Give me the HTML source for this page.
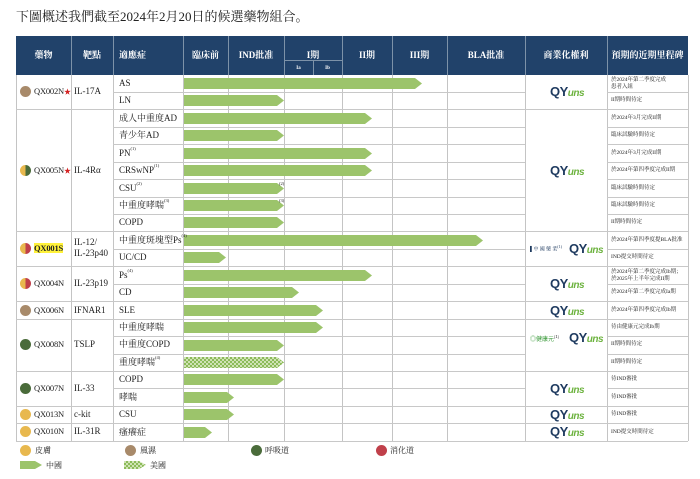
<!DOCTYPE html>
<html><head><meta charset="utf-8"><style>
*{margin:0;padding:0;box-sizing:border-box}
body{width:700px;height:479px;background:#fff;position:relative;overflow:hidden;font-family:"Liberation Serif","Noto Serif CJK SC",serif;color:#222}
.a{position:absolute}
.hd{position:absolute;top:36px;height:39px;background:#21426a;}
.ht{position:absolute;color:#fff;font-weight:bold;font-size:9px;text-align:center;line-height:12px}
.v{position:absolute;width:1px;background:#c4c4c4}
.h{position:absolute;height:1px;background:#c8c8c8}
.hv{position:absolute;width:1px;background:#7d92a8}
.b{position:absolute;left:184px;height:11px;background:#9cc46b;clip-path:polygon(0 0,calc(100% - 7px) 0,100% 50%,calc(100% - 7px) 100%,0 100%)}
.p{background-color:#cfe3b5;background-image:linear-gradient(45deg,#8dbb5a 25%,transparent 25%,transparent 75%,#8dbb5a 75%),linear-gradient(45deg,#8dbb5a 25%,transparent 25%,transparent 75%,#8dbb5a 75%);background-size:4px 4px;background-position:0 0,2px 2px}
.t{position:absolute;left:119px;font-size:9px;height:17px;line-height:17px;white-space:nowrap}
.t sup,.s{font-size:4.5px;vertical-align:top;line-height:8px}
.m{position:absolute;left:611px;font-size:5.5px;line-height:6.5px;white-space:nowrap;display:flex;align-items:center;height:17px}
.d{position:absolute;left:34px;font-size:8.5px;white-space:nowrap;letter-spacing:-0.2px}
.g{position:absolute;left:74px;font-size:9px;white-space:nowrap;line-height:11px}
.c{position:absolute;left:20px;width:11px;height:11px;border-radius:50%}
.logo{position:absolute;font-family:"Liberation Sans",sans-serif;font-weight:bold;font-size:13px;line-height:12px;white-space:nowrap;letter-spacing:-0.5px}
.logo b{color:#1e3a5f}
.logo i{color:#6db33f;font-size:10px;font-weight:bold}
.star{color:#d42020;font-size:7px}
</style></head><body>
<div class="a" style="left:16px;top:6px;font-size:13px;">下圖概述我們截至2024年2月20日的候選藥物組合。</div>

<div class="hd" style="left:16px;width:672px"></div>
<div class="hv" style="left:71px;top:36px;height:39px"></div>
<div class="hv" style="left:113px;top:36px;height:39px"></div>
<div class="hv" style="left:183px;top:36px;height:39px"></div>
<div class="hv" style="left:228px;top:36px;height:39px"></div>
<div class="hv" style="left:284px;top:36px;height:39px"></div>
<div class="hv" style="left:342px;top:36px;height:39px"></div>
<div class="hv" style="left:392px;top:36px;height:39px"></div>
<div class="hv" style="left:447px;top:36px;height:39px"></div>
<div class="hv" style="left:525px;top:36px;height:39px"></div>
<div class="hv" style="left:607px;top:36px;height:39px"></div>
<div class="hv" style="left:313px;top:60px;height:15px"></div>
<div class="a" style="left:284px;top:60px;width:58px;height:1px;background:#7d92a8"></div>
<div class="ht" style="left:16px;width:55px;top:49px">藥物</div>
<div class="ht" style="left:71px;width:42px;top:49px">靶點</div>
<div class="ht" style="left:119px;top:49px">適應症</div>
<div class="ht" style="left:183px;width:45px;top:49px">臨床前</div>
<div class="ht" style="left:228px;width:56px;top:49px">IND批准</div>
<div class="ht" style="left:284px;width:58px;top:49px">I期</div>
<div class="ht" style="left:284px;width:29px;top:63px;font-size:5px">Ia</div>
<div class="ht" style="left:313px;width:29px;top:63px;font-size:5px">Ib</div>
<div class="ht" style="left:342px;width:50px;top:49px">II期</div>
<div class="ht" style="left:392px;width:55px;top:49px">III期</div>
<div class="ht" style="left:447px;width:78px;top:49px">BLA批准</div>
<div class="ht" style="left:525px;width:82px;top:49px">商業化權利</div>
<div class="ht" style="left:607px;width:81px;top:49px">預期的近期里程碑</div>

<div class="v" style="left:16px;top:75px;height:366px"></div>
<div class="v" style="left:71px;top:75px;height:366px"></div>
<div class="v" style="left:113px;top:75px;height:366px"></div>
<div class="v" style="left:183px;top:75px;height:366px"></div>
<div class="v" style="left:228px;top:75px;height:366px"></div>
<div class="v" style="left:284px;top:75px;height:366px"></div>
<div class="v" style="left:342px;top:75px;height:366px"></div>
<div class="v" style="left:392px;top:75px;height:366px"></div>
<div class="v" style="left:447px;top:75px;height:366px"></div>
<div class="v" style="left:525px;top:75px;height:366px"></div>
<div class="v" style="left:607px;top:75px;height:366px"></div>
<div class="v" style="left:688px;top:75px;height:366px"></div>

<div class="h" style="left:113px;width:412px;top:92px"></div><div class="h" style="left:607px;width:81px;top:92px"></div>
<div class="h" style="left:113px;width:412px;top:127px"></div><div class="h" style="left:607px;width:81px;top:127px"></div>
<div class="h" style="left:113px;width:412px;top:144px"></div><div class="h" style="left:607px;width:81px;top:144px"></div>
<div class="h" style="left:113px;width:412px;top:162px"></div><div class="h" style="left:607px;width:81px;top:162px"></div>
<div class="h" style="left:113px;width:412px;top:179px"></div><div class="h" style="left:607px;width:81px;top:179px"></div>
<div class="h" style="left:113px;width:412px;top:197px"></div><div class="h" style="left:607px;width:81px;top:197px"></div>
<div class="h" style="left:113px;width:412px;top:214px"></div><div class="h" style="left:607px;width:81px;top:214px"></div>
<div class="h" style="left:113px;width:412px;top:249px"></div><div class="h" style="left:607px;width:81px;top:249px"></div>
<div class="h" style="left:113px;width:412px;top:284px"></div><div class="h" style="left:607px;width:81px;top:284px"></div>
<div class="h" style="left:113px;width:412px;top:336px"></div><div class="h" style="left:607px;width:81px;top:336px"></div>
<div class="h" style="left:113px;width:412px;top:354px"></div><div class="h" style="left:607px;width:81px;top:354px"></div>
<div class="h" style="left:113px;width:412px;top:388px"></div><div class="h" style="left:607px;width:81px;top:388px"></div>
<div class="h" style="left:16px;width:672px;top:109px"></div>
<div class="h" style="left:16px;width:672px;top:231px"></div>
<div class="h" style="left:16px;width:672px;top:266px"></div>
<div class="h" style="left:16px;width:672px;top:301px"></div>
<div class="h" style="left:16px;width:672px;top:319px"></div>
<div class="h" style="left:16px;width:672px;top:371px"></div>
<div class="h" style="left:16px;width:672px;top:406px"></div>
<div class="h" style="left:16px;width:672px;top:423px"></div>
<div class="h" style="left:16px;width:672px;top:441px"></div>

<div class="b" style="top:78px;width:238px"></div>
<div class="b" style="top:95px;width:100px"></div>
<div class="b" style="top:113px;width:188px"></div>
<div class="b" style="top:130px;width:100px"></div>
<div class="b" style="top:148px;width:188px"></div>
<div class="b" style="top:165px;width:188px"></div>
<div class="b" style="top:183px;width:100px"></div>
<div class="b" style="top:200px;width:100px"></div>
<div class="b" style="top:217px;width:100px"></div>
<div class="b" style="top:235px;width:299px"></div>
<div class="b" style="top:252px;width:42px"></div>
<div class="b" style="top:270px;width:188px"></div>
<div class="b" style="top:287px;width:115px"></div>
<div class="b" style="top:305px;width:139px"></div>
<div class="b" style="top:322px;width:139px"></div>
<div class="b" style="top:340px;width:100px"></div>
<div class="b p" style="top:357px;width:100px"></div>
<div class="b" style="top:374px;width:100px"></div>
<div class="b" style="top:392px;width:50px"></div>
<div class="b" style="top:409px;width:50px"></div>
<div class="b" style="top:427px;width:28px"></div>
<div class="a s" style="left:279px;top:180px">(2)</div>
<div class="a s" style="left:279px;top:197px">(3)</div>

<div class="t" style="top:75px">AS</div>
<div class="t" style="top:92px">LN</div>
<div class="t" style="top:110px">成人中重度AD</div>
<div class="t" style="top:127px">青少年AD</div>
<div class="t" style="top:145px">PN<sup>(1)</sup></div>
<div class="t" style="top:162px">CRSwNP<sup>(1)</sup></div>
<div class="t" style="top:180px">CSU<sup>(2)</sup></div>
<div class="t" style="top:197px">中重度哮喘<sup>(3)</sup></div>
<div class="t" style="top:214px">COPD</div>
<div class="t" style="top:232px">中重度斑塊型Ps<sup>(4)</sup></div>
<div class="t" style="top:249px">UC/CD</div>
<div class="t" style="top:267px">Ps<sup>(4)</sup></div>
<div class="t" style="top:284px">CD</div>
<div class="t" style="top:302px">SLE</div>
<div class="t" style="top:319px">中重度哮喘</div>
<div class="t" style="top:336px">中重度COPD</div>
<div class="t" style="top:354px">重度哮喘<sup>(4)</sup></div>
<div class="t" style="top:371px">COPD</div>
<div class="t" style="top:389px">哮喘</div>
<div class="t" style="top:406px">CSU</div>
<div class="t" style="top:424px">瘙癢症</div>

<div class="c" style="top:86px;background:#a88a6a"></div>
<div class="d" style="top:86px">QX002N<span class="star">★</span></div>
<div class="g" style="top:86px">IL-17A</div>
<div class="c" style="top:165px;background:linear-gradient(90deg,#e8b84e 50%,#4a6b3a 50%)"></div>
<div class="d" style="top:165px">QX005N<span class="star">★</span></div>
<div class="g" style="top:165px">IL-4Rα</div>
<div class="c" style="top:243px;background:linear-gradient(90deg,#e8b84e 50%,#c0404a 50%)"></div>
<div class="d" style="top:243px;font-weight:bold;background:#fff23a">QX001S</div>
<div class="g" style="top:237px">IL-12/<br>IL-23p40</div>
<div class="c" style="top:278px;background:linear-gradient(90deg,#e8b84e 50%,#c0404a 50%)"></div>
<div class="d" style="top:278px">QX004N</div>
<div class="g" style="top:278px">IL-23p19</div>
<div class="c" style="top:305px;background:#a88a6a"></div>
<div class="d" style="top:305px">QX006N</div>
<div class="g" style="top:305px">IFNAR1</div>
<div class="c" style="top:339px;background:#4a6b3a"></div>
<div class="d" style="top:339px">QX008N</div>
<div class="g" style="top:339px">TSLP</div>
<div class="c" style="top:383px;background:#4a6b3a"></div>
<div class="d" style="top:383px">QX007N</div>
<div class="g" style="top:383px">IL-33</div>
<div class="c" style="top:409px;background:#e8b84e"></div>
<div class="d" style="top:409px">QX013N</div>
<div class="g" style="top:409px">c-kit</div>
<div class="c" style="top:426px;background:#e8b84e"></div>
<div class="d" style="top:426px">QX010N</div>
<div class="g" style="top:426px">IL-31R</div>

<div class="logo" style="left:550px;top:86px"><b>QY</b><i>uns</i></div>
<div class="logo" style="left:550px;top:165px"><b>QY</b><i>uns</i></div>
<div class="a" style="left:530px;top:244px;font-size:5px;color:#1e3a5f">▌中 國 藥 業<sup>(1)</sup></div>
<div class="logo" style="left:569px;top:243px"><b>QY</b><i>uns</i></div>
<div class="logo" style="left:550px;top:278px"><b>QY</b><i>uns</i></div>
<div class="logo" style="left:550px;top:305px"><b>QY</b><i>uns</i></div>
<div class="a" style="left:530px;top:334px;font-size:6px;color:#3a9a3a;font-family:'Noto Sans CJK SC',sans-serif">◎健康元<sup style="font-size:4px;color:#222">(1)</sup></div>
<div class="logo" style="left:569px;top:332px"><b>QY</b><i>uns</i></div>
<div class="logo" style="left:550px;top:383px"><b>QY</b><i>uns</i></div>
<div class="logo" style="left:550px;top:409px"><b>QY</b><i>uns</i></div>
<div class="logo" style="left:550px;top:426px"><b>QY</b><i>uns</i></div>

<div class="m" style="top:75px">於2024年第二季度完成<br>患者入組</div>
<div class="m" style="top:92px">II期時間待定</div>
<div class="m" style="top:110px">於2024年3月完成II期</div>
<div class="m" style="top:127px">臨床試驗時間待定</div>
<div class="m" style="top:145px">於2024年3月完成II期</div>
<div class="m" style="top:162px">於2024年第四季度完成II期</div>
<div class="m" style="top:180px">臨床試驗時間待定</div>
<div class="m" style="top:197px">臨床試驗時間待定</div>
<div class="m" style="top:214px">II期時間待定</div>
<div class="m" style="top:232px">於2024年第四季度提BLA批准</div>
<div class="m" style="top:249px">IND提交時間待定</div>
<div class="m" style="top:267px">於2024年第二季度完成Ib期；<br>於2025年上半年完成II期</div>
<div class="m" style="top:284px">於2024年第二季度完成Ia期</div>
<div class="m" style="top:302px">於2024年第四季度完成Ib期</div>
<div class="m" style="top:319px">待由健康元完成Ib期</div>
<div class="m" style="top:336px">II期時間待定</div>
<div class="m" style="top:354px">II期時間待定</div>
<div class="m" style="top:371px">待IND審批</div>
<div class="m" style="top:389px">待IND審批</div>
<div class="m" style="top:406px">待IND審批</div>
<div class="m" style="top:424px">IND提交時間待定</div>

<div class="c" style="top:445px;left:20px;background:#e8b84e"></div>
<div class="a" style="left:35px;top:445px;font-size:8px">皮膚</div>
<div class="c" style="top:445px;left:125px;background:#a88a6a"></div>
<div class="a" style="left:140px;top:445px;font-size:8px">風濕</div>
<div class="c" style="top:445px;left:251px;background:#4a6b3a"></div>
<div class="a" style="left:265px;top:445px;font-size:8px">呼吸道</div>
<div class="c" style="top:445px;left:376px;background:#c0404a"></div>
<div class="a" style="left:390px;top:445px;font-size:8px">消化道</div>
<div class="b" style="left:20px;top:461px;width:22px;height:8px"></div>
<div class="a" style="left:46px;top:460px;font-size:8px">中國</div>
<div class="b p" style="left:124px;top:461px;width:22px;height:8px"></div>
<div class="a" style="left:150px;top:460px;font-size:8px">美國</div>
</body></html>
